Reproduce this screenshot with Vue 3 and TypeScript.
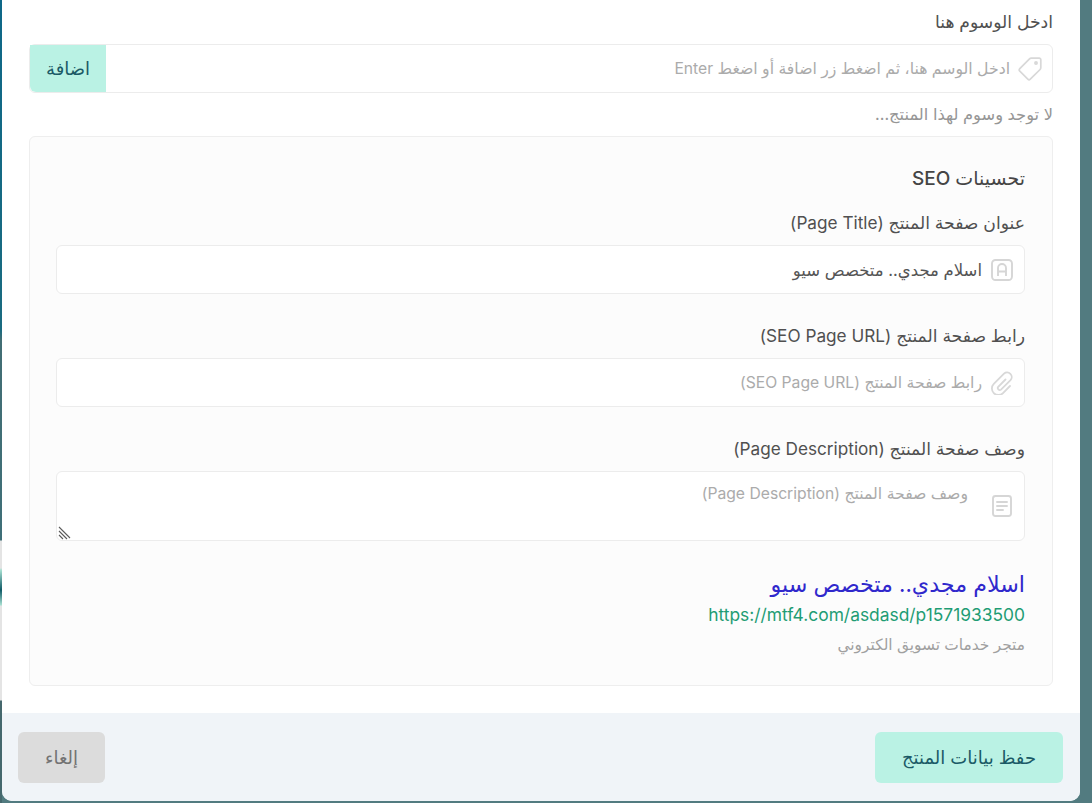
<script setup lang="ts">
interface Field { label: string; placeholder?: string; value?: string; icon: string }
const fields: Field[] = [
  { label: 'عنوان صفحة المنتج (Page Title)', value: 'اسلام مجدي.. متخصص سيو', icon: 'title' },
  { label: 'رابط صفحة المنتج (SEO Page URL)', placeholder: 'رابط صفحة المنتج (SEO Page URL)', icon: 'link' },
]
</script>

<template>
  <div class="backdrop" dir="rtl">
    <section class="modal">
      <div class="body">
        <label class="label tags-label">ادخل الوسوم هنا</label>
        <div class="box tags-box">
          <svg class="icon" viewBox="0 0 24 24" fill="none" stroke="#d8d8d8" stroke-width="1.7" stroke-linejoin="round">
            <path d="M13.2 1.2h8a1.6 1.6 0 0 1 1.6 1.6v8a2.4 2.4 0 0 1-.7 1.7L12.3 22.2a1.8 1.8 0 0 1-2.5 0L1.8 14.2a1.8 1.8 0 0 1 0-2.5l9.7-9.8a2.4 2.4 0 0 1 1.7-.7z" />
            <circle cx="18" cy="6" r="1.1" fill="#d8d8d8" />
          </svg>
          <span class="placeholder">ادخل الوسم هنا، ثم اضغط زر اضافة أو اضغط Enter</span>
          <button class="add" type="button">اضافة</button>
        </div>
        <p class="hint">لا توجد وسوم لهذا المنتج...</p>

        <div class="seo">
          <h3 class="seo-title">تحسينات SEO</h3>
          <div v-for="f in fields" :key="f.label" class="field">
            <label class="label">{{ f.label }}</label>
            <div class="box">
              <svg v-if="f.icon === 'title'" class="icon" viewBox="0 0 24 24" fill="none" stroke="#d6d6d6" stroke-width="1.9" stroke-linejoin="round">
                <rect x="2" y="2" width="20" height="20" rx="3.5" />
                <path d="M8 18V10a4 4 0 0 1 8 0v8M8 13.5h8" />
              </svg>
              <svg v-else class="icon" viewBox="0 0 24 24" fill="none" stroke="#d8d8d8" stroke-width="1.8" stroke-linecap="round">
                <path d="M15.5 8.5L8.2 15.8a2 2 0 0 0 2.8 2.8L20.5 9.2a4.6 4.6 0 0 0-6.5-6.5L3.8 12.9a6.5 6.5 0 0 0 9.2 9.2L20 15" />
              </svg>
              <span :class="f.value ? 'value' : 'placeholder'">{{ f.value || f.placeholder }}</span>
            </div>
          </div>
          <div class="field last">
            <label class="label">وصف صفحة المنتج (Page Description)</label>
            <div class="box area">
              <svg class="icon" viewBox="0 0 24 24" fill="none" stroke="#d6d6d6" stroke-width="1.9" stroke-linecap="round">
                <rect x="3" y="2" width="18" height="20" rx="2.5" />
                <path d="M7 8h10M7 12h10M7 16h6" />
              </svg>
              <span class="placeholder">وصف صفحة المنتج (Page Description)</span>
              <svg class="grip" viewBox="0 0 14 14" stroke="#5c5c5c" stroke-width="1.1">
                <path d="M2 1l11 11M2 5l8 8M2 9l4 4" />
              </svg>
            </div>
          </div>
          <div class="preview">
            <div class="p-title">اسلام مجدي.. متخصص سيو</div>
            <div class="p-url" dir="ltr">https://mtf4.com/asdasd/p1571933500</div>
            <div class="p-desc">متجر خدمات تسويق الكتروني</div>
          </div>
        </div>
      </div>
      <footer class="foot">
        <button class="btn save" type="button">حفظ بيانات المنتج</button>
        <button class="btn cancel" type="button">إلغاء</button>
      </footer>
    </section>
  </div>
</template>

<style>
html, body { margin: 0; height: 100%; overflow: hidden; }
</style>

<style scoped>
.backdrop {
  height: 803px;
  box-sizing: border-box;
  background:
    linear-gradient(to bottom, #0e6888 0, #1a6b80 330px, #426e74 340px, #3f6f78 540px, #e4e4e4 541px, #e4e4e4 568px, #a8e0d2 570px, #0f5a66 590px, #a8e0d2 605px, #e4e4e4 606px, #e4e4e4 700px, #45686d 701px, #45686d 803px) left top / 2px 100% no-repeat,
    #527b80;
  padding: 0 12px 2px 2px;
  font-family: Inter, "DejaVu Sans", sans-serif;
}
.modal {
  height: 801px;
  background: #fff;
  border-radius: 0 0 10px 10px;
  display: flex;
  flex-direction: column;
  overflow: hidden;
}
.body { flex: 1; padding: 0 27px; }
.label { display: block; font-size: 17.2px; line-height: 24px; color: #505050; }
.tags-label { margin-top: 10px; margin-bottom: 10px; }
.box {
  height: 49px;
  box-sizing: border-box;
  background: #fff;
  border: 1px solid #ececec;
  border-radius: 6px;
  display: flex;
  align-items: center;
  padding-inline-start: 10px;
  position: relative;
}
.icon { width: 24px; height: 24px; flex: none; margin-inline-end: 8px; }
.placeholder { font-size: 15.7px; color: #ababab; }
.value { font-size: 16.5px; color: #555; }
.add {
  margin-inline-start: auto;
  align-self: stretch;
  width: 76px;
  border: 0;
  background: #baf2e4;
  color: #1b5a66;
  font: inherit;
  font-size: 18px;
  border-radius: 0 0 0 6px;
}
.hint { margin: 11px 0 12px; font-size: 16.3px; line-height: 20px; color: #969696; }
.seo {
  border: 1px solid #eeeeee;
  border-radius: 6px;
  background: #fcfcfc;
  padding: 26px 27px 0 26px;
  height: 550px;
  box-sizing: border-box;
}
.seo-title { margin: 0 0 16px; font-size: 19px; line-height: 32px; font-weight: 500; color: #454545; }
.field { margin-bottom: 30px; }
.field.last { margin-bottom: 0; }
.field .label { margin-bottom: 10px; }
.area { height: 70px; padding-inline-start: 10px; }
.area .placeholder { align-self: flex-start; margin-top: 12px; margin-inline-start: 14px; }
.grip { position: absolute; left: 0; bottom: 0; width: 14px; height: 14px; }
.preview { margin-top: 28px; }
.p-title { font-size: 22.2px; line-height: 30px; color: #3028cc; }
.p-url { font-size: 17.4px; line-height: 31px; color: #1f9c74; text-align: right; }
.p-desc { font-size: 15.4px; line-height: 30px; color: #a0a0a0; }
.foot {
  height: 88px;
  background: #f0f4f8;
  display: flex;
  justify-content: space-between;
  align-items: flex-start;
  padding: 19px 17px 0 16px;
  box-sizing: border-box;
  margin-top: 27px;
}
.btn {
  height: 51px;
  border: 0;
  border-radius: 6px;
  font: inherit;
}
.save { width: 188px; background: #baf2e4; color: #1b5a66; font-size: 18px; }
.cancel { width: 87px; background: #dcdcdc; color: #737373; font-size: 18px; }
</style>
